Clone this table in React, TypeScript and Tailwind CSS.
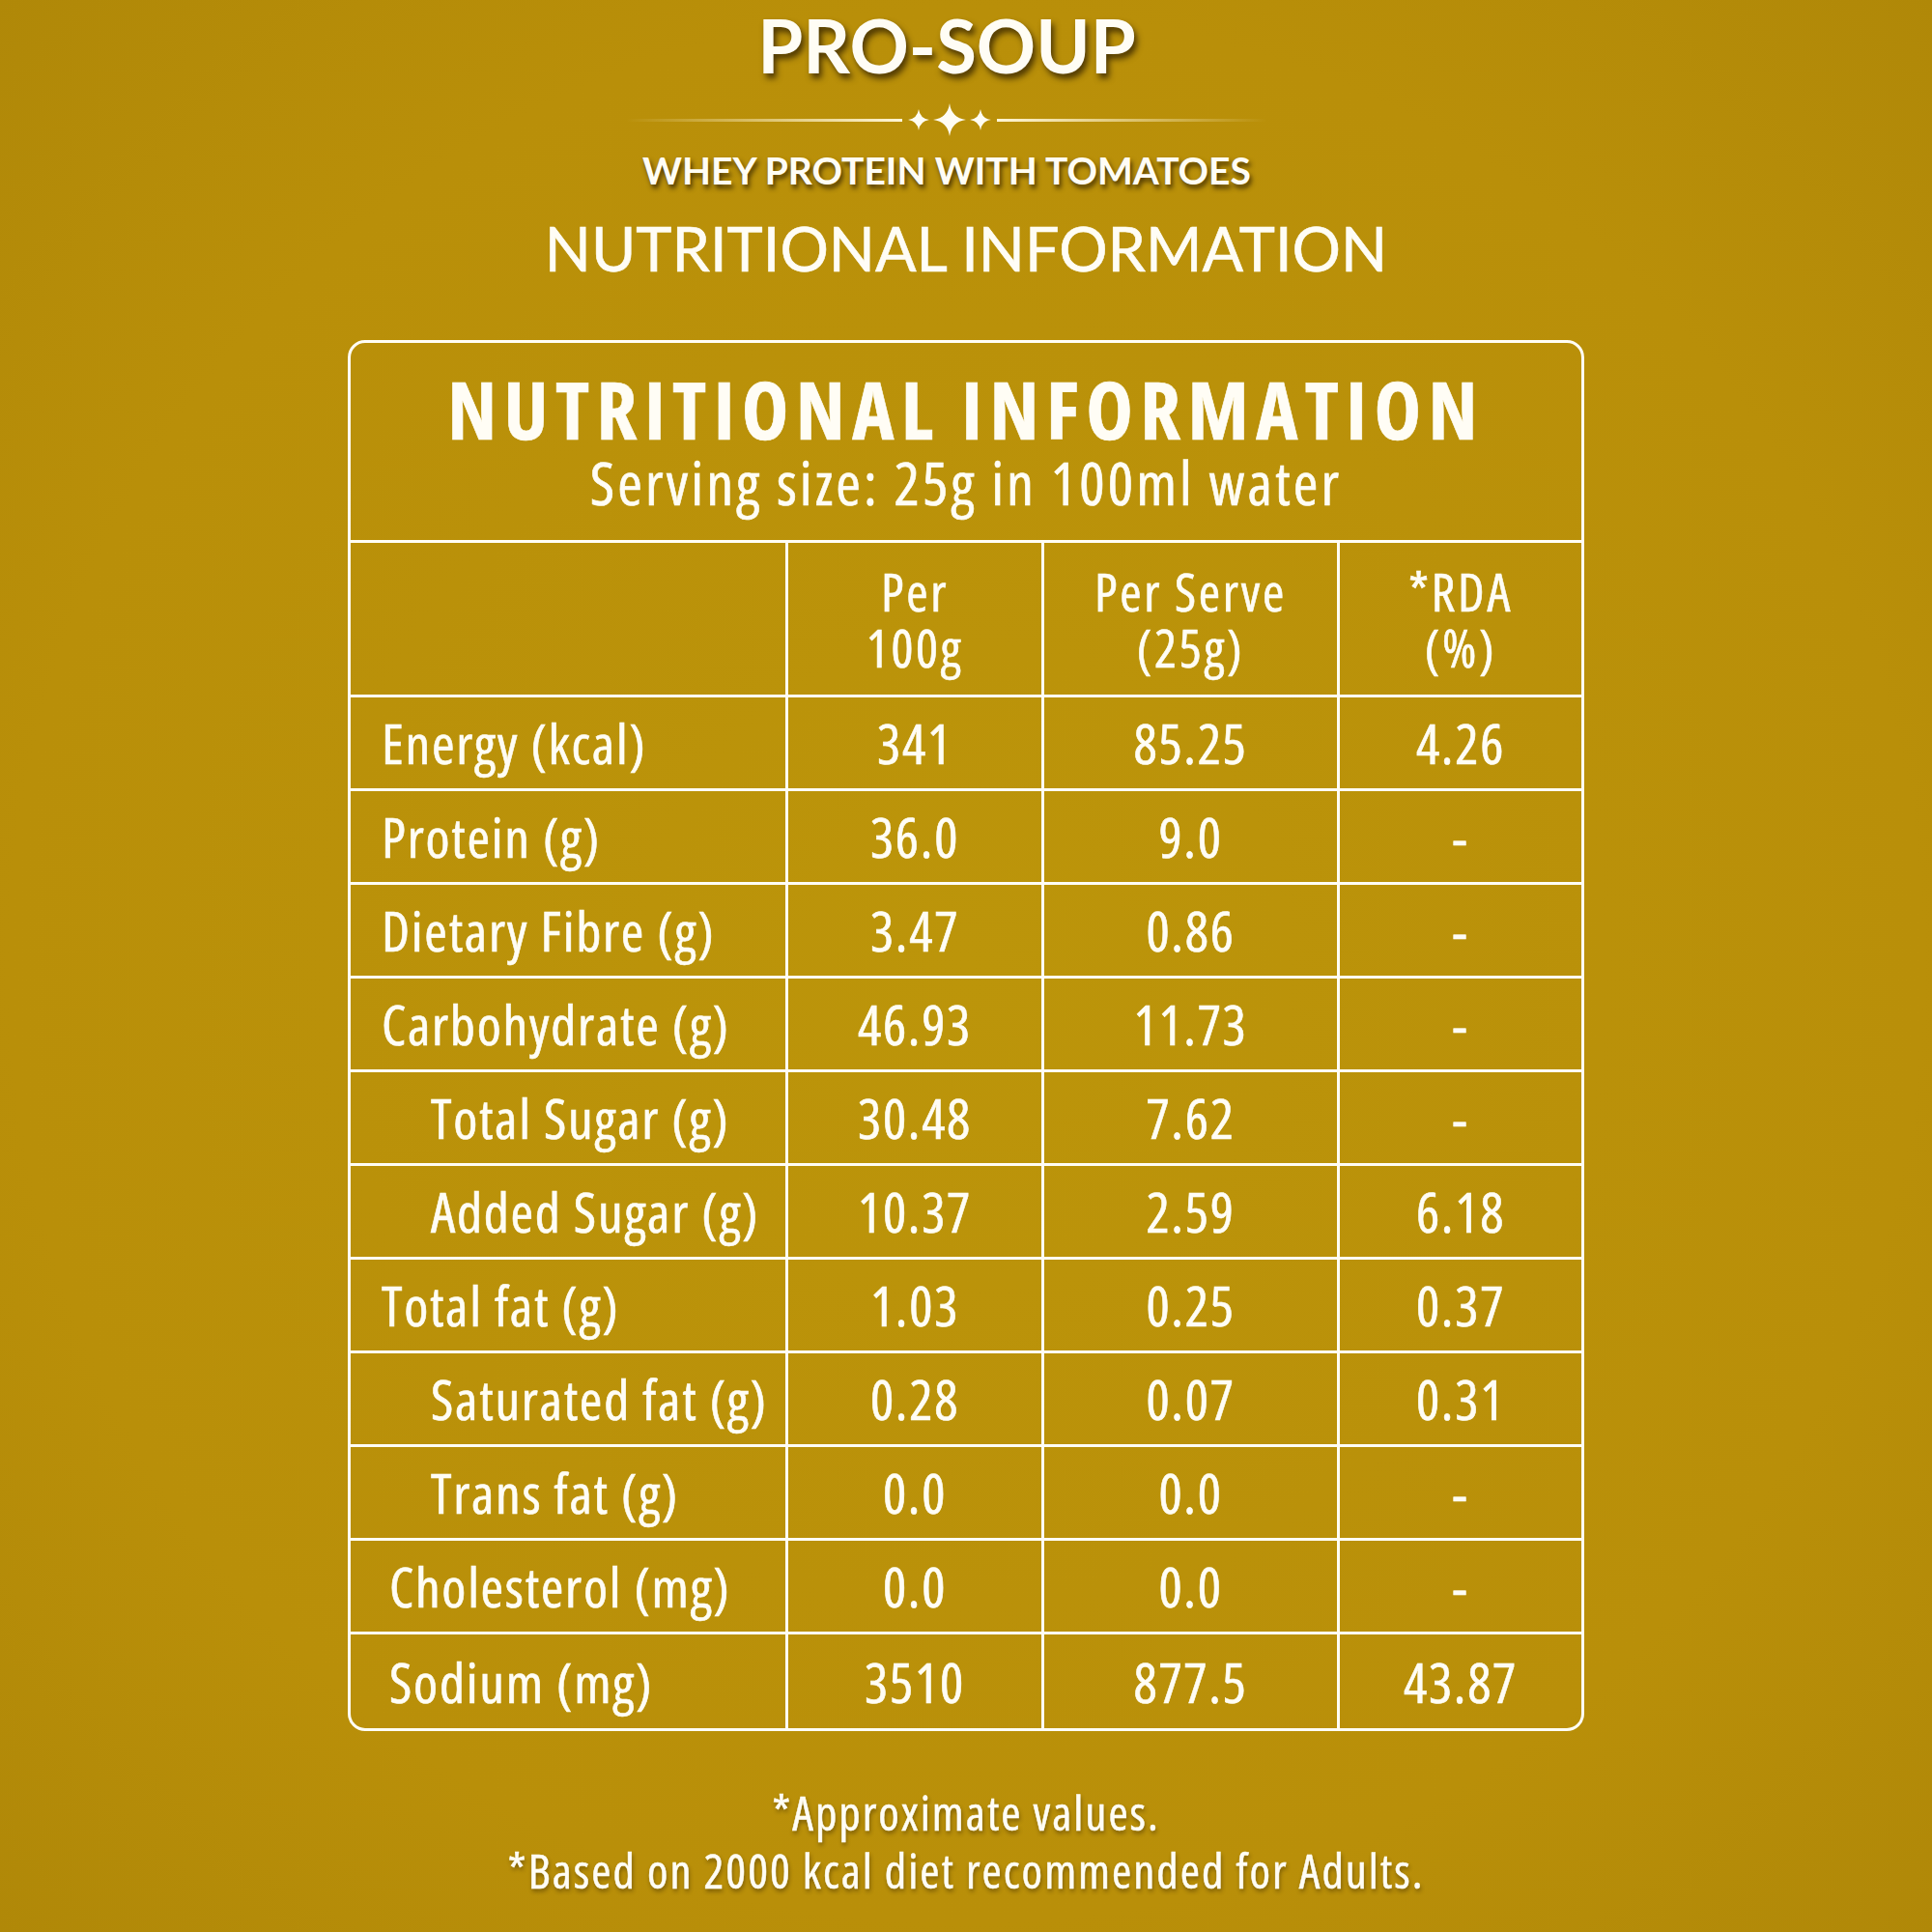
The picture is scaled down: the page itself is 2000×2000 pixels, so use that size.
import React from "react";

const narrow = {
  fontFamily: '"Open Sans", "Noto Sans", sans-serif',
  fontStretch: "75%",
};

type Row = {
  label: string;
  indent: "none" | "sub" | "mid";
  per100: string;
  perServe: string;
  rda: string;
};

const rows: Row[] = [
  { label: "Energy (kcal)", indent: "none", per100: "341", perServe: "85.25", rda: "4.26" },
  { label: "Protein (g)", indent: "none", per100: "36.0", perServe: "9.0", rda: "-" },
  { label: "Dietary Fibre (g)", indent: "none", per100: "3.47", perServe: "0.86", rda: "-" },
  { label: "Carbohydrate (g)", indent: "none", per100: "46.93", perServe: "11.73", rda: "-" },
  { label: "Total Sugar (g)", indent: "sub", per100: "30.48", perServe: "7.62", rda: "-" },
  { label: "Added Sugar (g)", indent: "sub", per100: "10.37", perServe: "2.59", rda: "6.18" },
  { label: "Total fat (g)", indent: "none", per100: "1.03", perServe: "0.25", rda: "0.37" },
  { label: "Saturated fat (g)", indent: "sub", per100: "0.28", perServe: "0.07", rda: "0.31" },
  { label: "Trans fat (g)", indent: "sub", per100: "0.0", perServe: "0.0", rda: "-" },
  { label: "Cholesterol (mg)", indent: "mid", per100: "0.0", perServe: "0.0", rda: "-" },
  { label: "Sodium (mg)", indent: "mid", per100: "3510", perServe: "877.5", rda: "43.87" },
];

const Star = ({ w, h }: { w: number; h: number }) => (
  <svg width={w} height={h} viewBox="-1 -1 2 2" className="block">
    <path
      d="M0,-1 Q0.12,-0.12 1,0 Q0.12,0.12 0,1 Q-0.12,0.12 -1,0 Q-0.12,-0.12 0,-1 Z"
      fill="#FFFDF3"
    />
  </svg>
);

const App = () => {
  const indentClass = (i: Row["indent"]) =>
    i === "sub" ? "pl-[83px]" : i === "mid" ? "pl-[40px]" : "pl-[32px]";

  return (
    <div
      className="flex h-[2000px] w-[2000px] flex-col items-center whitespace-nowrap bg-[#B9910A] bg-[radial-gradient(ellipse_at_center,#BC950A_0%,#B98F09_70%,#B08808_100%)] text-[#FFFDF5]"
      style={{ fontFamily: 'Lato, "Open Sans", sans-serif' }}
    >
      <div className="flex w-full flex-col items-center pr-[40px]">
        <h1 className="mt-[7px] text-[76px] font-bold leading-[80px] [text-shadow:3px_5px_6px_rgba(40,25,0,0.75)]">
          PRO-SOUP
        </h1>
        <div className="mt-[17px] flex h-[40px] items-center">
          <div className="h-[3px] w-[286px] bg-gradient-to-r from-transparent to-[#FFF6D6]" />
          <div className="mx-[6px] flex items-center gap-[4px]">
            <Star w={22} h={22} />
            <Star w={34} h={40} />
            <Star w={22} h={22} />
          </div>
          <div className="h-[3px] w-[280px] bg-gradient-to-l from-transparent to-[#FFF6D6]" />
        </div>
        <p className="mt-[12px] text-[39px] font-bold leading-[40px] [text-shadow:2px_4px_5px_rgba(40,25,0,0.75)]">
          WHEY PROTEIN WITH TOMATOES
        </p>
      </div>
      <h2 className="mt-[27px] text-[63px] font-normal leading-[68px] [-webkit-text-stroke:0.6px_#FFFDF5]">
        NUTRITIONAL INFORMATION
      </h2>

      <div
        className="mt-[61px] w-[1280px] overflow-hidden rounded-[18px] border-[3px] border-[#FFFDF5] [-webkit-text-stroke:0.6px_#FFFDF5]"
        style={narrow}
      >
        <div className="flex h-[207px] flex-col items-center border-b-[3px] border-[#FFFDF5] pt-[28px]">
          <div className="text-[82px] font-bold leading-[80px] tracking-[0.09em]">
            NUTRITIONAL INFORMATION
          </div>
          <div className="mt-[6px] text-[62px] leading-[60px] tracking-[0.05em]">
            Serving size: 25g in 100ml water
          </div>
        </div>

        <div className="grid grid-cols-[453px_265px_306px_1fr] text-[57px] leading-[56px] tracking-[0.03em]">
          <div className="h-[160px] border-b-[3px] border-r-[3px] border-[#FFFDF5]" />
          <div className="flex h-[160px] items-center justify-center border-b-[3px] border-r-[3px] border-[#FFFDF5] text-center text-[54px] leading-[58px] tracking-[0.05em]">
            Per
            <br />
            100g
          </div>
          <div className="flex h-[160px] items-center justify-center border-b-[3px] border-r-[3px] border-[#FFFDF5] text-center text-[54px] leading-[58px] tracking-[0.05em]">
            Per Serve
            <br />
            (25g)
          </div>
          <div className="flex h-[160px] items-center justify-center border-b-[3px] border-[#FFFDF5] text-center text-[54px] leading-[58px] tracking-[0.05em]">
            *RDA
            <br />
            (%)
          </div>

          {rows.map((r, idx) => {
            const last = idx === rows.length - 1;
            const b = last ? "" : "border-b-[3px]";
            return (
              <React.Fragment key={r.label}>
                <div
                  className={`flex h-[97px] items-center border-r-[3px] border-[#FFFDF5] ${b} ${indentClass(r.indent)}`}
                >
                  {r.label}
                </div>
                <div className={`flex h-[97px] items-center justify-center border-r-[3px] border-[#FFFDF5] ${b}`}>
                  {r.per100}
                </div>
                <div className={`flex h-[97px] items-center justify-center border-r-[3px] border-[#FFFDF5] ${b}`}>
                  {r.perServe}
                </div>
                <div className={`flex h-[97px] items-center justify-center border-[#FFFDF5] ${b}`}>
                  {r.rda}
                </div>
              </React.Fragment>
            );
          })}
        </div>
      </div>

      <div
        className="mt-[54px] text-center text-[49px] leading-[60px] tracking-[0.04em] [-webkit-text-stroke:0.5px_#FFFDF5] [text-shadow:1px_3px_4px_rgba(40,25,0,0.45)]"
        style={narrow}
      >
        <p>*Approximate values.</p>
        <p>*Based on 2000 kcal diet recommended for Adults.</p>
      </div>
    </div>
  );
};

export default App;
